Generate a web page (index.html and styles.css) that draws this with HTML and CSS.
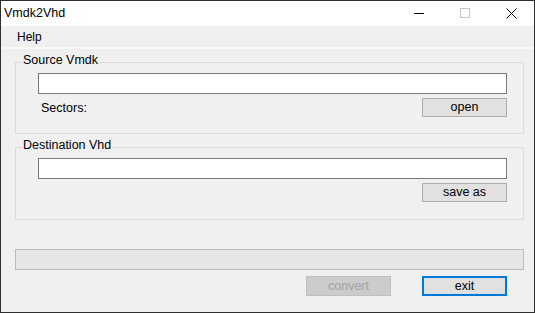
FILE: index.html
```html
<!DOCTYPE html>
<html lang="en">
<head>
    <meta charset="UTF-8">
    <title>Vmdk2Vhd</title>
    <link rel="stylesheet" href="styles.css">
</head>
<body>
    <div class="window">
        <div class="titlebar">
            <span class="title">Vmdk2Vhd</span>
            <div class="controls">
                <span class="ctl">
                    <svg width="10" height="10" viewBox="0 0 10 10"><path d="M0 5.5H10" stroke="#000" stroke-width="1"/></svg>
                </span>
                <span class="ctl">
                    <svg width="10" height="10" viewBox="0 0 10 10"><rect x="0.5" y="0.5" width="9" height="9" fill="none" stroke="#c6c6c6" stroke-width="1"/></svg>
                </span>
                <span class="ctl">
                    <svg width="11" height="11" viewBox="0 0 11 11"><path d="M0.5 0.5L10.5 10.5M10.5 0.5L0.5 10.5" stroke="#000" stroke-width="1"/></svg>
                </span>
            </div>
        </div>
        <div class="menubar">
            <span class="menu-item">Help</span>
        </div>

        <div class="client">
            <!-- Source -->
            <fieldset class="group">
                <legend>Source Vmdk</legend>
                <input type="text" class="path">
                <div class="row">
                    <span class="label">Sectors:</span>
                    <button class="btn">open</button>
                </div>
            </fieldset>

            <!-- Destination -->
            <fieldset class="group dest">
                <legend>Destination Vhd</legend>
                <input type="text" class="path">
                <div class="row end">
                    <button class="btn">save as</button>
                </div>
            </fieldset>

            <div class="progress"></div>

            <div class="actions">
                <button class="btn tall" disabled>convert</button>
                <button class="btn tall default">exit</button>
            </div>
        </div>
    </div>
</body>
</html>
```

FILE: styles.css
```css
body {
    margin: 0;
    font-family: "Liberation Sans", Arial, sans-serif;
    font-size: 12.5px;
    color: #000;
    background: #f0f0f0;
}
.window {
    width: 535px;
    height: 313px;
    box-sizing: border-box;
    border: 1px solid #2f2f2f;
    background: #f0f0f0;
    display: flex;
    flex-direction: column;
}
.titlebar {
    height: 25px;
    background: #fff;
    display: flex;
    align-items: center;
    justify-content: space-between;
}
.title {
    padding-left: 3px;
    margin-top: -2px;
}
.controls {
    display: flex;
    height: 100%;
}
.ctl {
    width: 46px;
    display: flex;
    align-items: center;
    justify-content: center;
}
.ctl svg {
    display: block;
    margin-top: -1px;
}
.menubar {
    height: 21px;
    background: #f0f0f0;
    border-bottom: 2px solid #fafafa;
    display: flex;
    align-items: center;
}
.menu-item {
    padding-left: 16px;
    font-size: 12px;
}
.client {
    padding: 4px 10px 0 14px;
    display: flex;
    flex-direction: column;
}
.group {
    margin: 0 0 4px 0;
    padding: 2px 16px 16px 22px;
    border: 1px solid #dcdcdc;
    min-width: 0;
}
.group.dest {
    padding-bottom: 17px;
}
.group legend {
    margin-left: -16px;
    padding: 0 1px 4px 1px;
    line-height: 14px;
}
.path {
    display: block;
    width: 100%;
    height: 21px;
    box-sizing: border-box;
    margin: 0;
    border: 1px solid #7a7a7a;
    background: #fff;
    padding: 0 3px;
    font: inherit;
    outline: none;
}
.row {
    margin-top: 4px;
    display: flex;
    justify-content: space-between;
    align-items: center;
}
.row.end {
    justify-content: flex-end;
}
.label {
    padding-left: 3px;
}
.btn {
    width: 85px;
    height: 19px;
    box-sizing: border-box;
    margin: 0;
    padding: 0;
    background: #e1e1e1;
    border: 1px solid #adadad;
    font: inherit;
    color: #000;
    line-height: 17px;
}
.btn.tall {
    height: 20px;
    line-height: 18px;
}
.btn:disabled {
    background: #cccccc;
    border-color: #bfbfbf;
    color: #a2a2a2;
}
.btn.default {
    border: 2px solid #0078d7;
    line-height: 16px;
}
.progress {
    margin-top: 25px;
    height: 21px;
    box-sizing: border-box;
    background: #e6e6e6;
    border: 1px solid #bcbcbc;
}
.actions {
    margin-top: 6px;
    padding-right: 17px;
    display: flex;
    justify-content: flex-end;
    gap: 31px;
}
```
